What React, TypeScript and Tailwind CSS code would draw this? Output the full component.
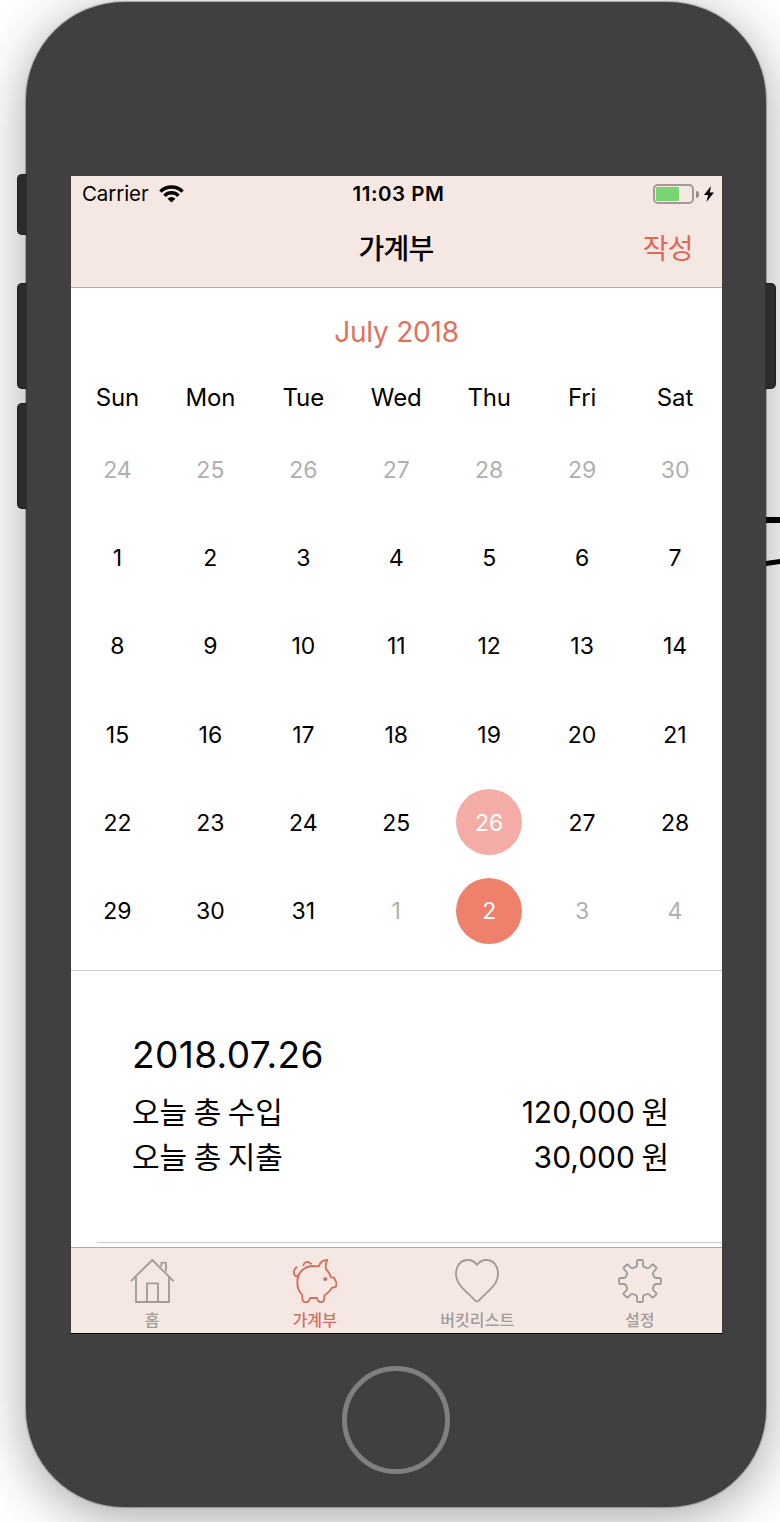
import type { ReactNode } from "react";

const weekdays = ["Sun", "Mon", "Tue", "Wed", "Thu", "Fri", "Sat"];

type DayKind = "normal" | "muted" | "selected" | "today";

const days: { label: number; kind: DayKind }[] = [
  ...[24, 25, 26, 27, 28, 29, 30].map((label) => ({ label, kind: "muted" as DayKind })),
  ...Array.from({ length: 31 }, (_, i) => ({
    label: i + 1,
    kind: (i + 1 === 26 ? "selected" : "normal") as DayKind,
  })),
  { label: 1, kind: "muted" },
  { label: 2, kind: "today" },
  { label: 3, kind: "muted" },
  { label: 4, kind: "muted" },
];

const dayStyles: Record<DayKind, string> = {
  normal: "text-black",
  muted: "text-[#b0b0b0]",
  selected: "bg-[#f4aca7] text-white",
  today: "bg-[#ef806b] text-white",
};

function gearPath() {
  const turn = (x: number, y: number, k: number) => {
    const a = (k * Math.PI) / 4;
    const px = 66 + x * Math.cos(a) - y * Math.sin(a);
    const py = 66 + x * Math.sin(a) + y * Math.cos(a);
    return `${px.toFixed(1)} ${py.toFixed(1)}`;
  };
  let d = `M${turn(-17, -41, 0)}`;
  for (let k = 0; k < 8; k++) {
    const p = (x: number, y: number) => turn(x, y, k);
    d += `Q${p(-9, -42)} ${p(-9, -49)}L${p(-9, -59)}Q${p(-9, -63)} ${p(-5, -63)}`;
    d += `L${p(5, -63)}Q${p(9, -63)} ${p(9, -59)}L${p(9, -49)}Q${p(9, -42)} ${p(17, -41)}`;
  }
  return d + "Z";
}

function Icon({ children }: { children: ReactNode }) {
  return (
    <svg
      viewBox="0 0 132 132"
      className="size-11"
      fill="none"
      stroke="currentColor"
      strokeWidth="5.6"
      strokeLinecap="round"
      strokeLinejoin="round"
    >
      {children}
    </svg>
  );
}

function HomeIcon() {
  return (
    <Icon>
      <path d="M4 65 67 3l62 62M18 54v75h99V54M51 129V73h33v56M94 21V11h14v24" />
    </Icon>
  );
}

function PigIcon() {
  return (
    <Icon>
      <path d="M13 72C12 42 31 23 58 21L77 22C81 11 91 3 103 3C98 12 97 21 99 31C106 37 111 45 114 55L123 56C127 60 126 67 130 69V79C129 84 123 86 117 86C111 97 103 104 94 110C94 117 94 123 91 127C86 131 79 130 75 125L72 117H52L48 125C44 131 35 131 30 127C26 122 30 115 27 106C18 98 13 87 13 72Z" />
      <path d="M11 25C3 29 1 40 4 47C6 52 10 53 17 50M31 19C34 9 43 5 54 14" />
      <circle cx="97" cy="60" r="3.5" fill="currentColor" />
    </Icon>
  );
}

function HeartIcon() {
  return (
    <Icon>
      <path d="M66 18C59 8 49 3 38 3C17 3 3 20 3 44C3 78 34 96 60 124Q66 131 72 124C98 96 129 78 129 44C129 20 115 3 94 3C83 3 73 8 66 18Z" />
    </Icon>
  );
}

function GearIcon() {
  return (
    <Icon>
      <path d={gearPath()} />
    </Icon>
  );
}

const tabs = [
  { label: "홈", icon: <HomeIcon />, active: false },
  { label: "가계부", icon: <PigIcon />, active: true },
  { label: "버킷리스트", icon: <HeartIcon />, active: false },
  { label: "설정", icon: <GearIcon />, active: false },
];

function StatusBar() {
  return (
    <div className="grid h-[36px] grid-cols-3 items-center px-[10px] text-[20.5px] leading-none">
      <div className="flex items-center gap-[10px] pl-[1px]">
        <span className="tracking-[-0.1px]">Carrier</span>
        <svg viewBox="0 0 26 19" className="mb-[1px] h-[18px] w-[25px]" fill="none" stroke="black" strokeWidth="3.6">
          <path d="M1.3 7A16.5 16.5 0 0 1 24.7 7M5.6 11.3A10.5 10.5 0 0 1 20.4 11.3" />
          <path d="M13 18.6 8.8 14.4A6 6 0 0 1 17.2 14.4Z" fill="black" stroke="none" />
        </svg>
      </div>
      <span className="pl-[4px] text-center text-[20.5px] font-semibold tracking-[0.5px]">11:03 PM</span>
      <div className="-mr-[2px] flex items-center justify-end">
        <div className="h-[20px] w-[41px] rounded-[5px] border-2 border-[#a39a97] p-[1px]">
          <div className="h-full w-[23px] rounded-[1px] bg-[#78d672]" />
        </div>
        <div className="ml-[2px] h-[7px] w-[3px] rounded-r-full bg-[#998f8c]" />
        <svg viewBox="0 0 10 16" className="ml-[5px] h-[16px] w-[10px]">
          <path d="M7 0 0 9H4.2L2.4 16 10 6.6H5.8Z" fill="black" />
        </svg>
      </div>
    </div>
  );
}

export default function App() {
  return (
    <div className="relative h-[1522px] w-[780px] overflow-hidden bg-white pt-[2px] pl-[26px] font-['Inter','Noto_Sans_CJK_KR',sans-serif] text-black">
      <div className="relative h-[1505px] w-[740px] rounded-[98px] bg-[#404040] pt-[174px] pl-[45px] shadow-[0_0_1px_1px_rgba(0,0,0,0.25),0_10px_54px_rgba(0,0,0,0.36)]">
        <div className="absolute top-[172px] -left-[9px] h-[61px] w-[10px] rounded-l-[5px] border border-r-0 border-[#1e1e1e] bg-[#2b2b2b]" />
        <div className="absolute top-[281px] -left-[9px] h-[106px] w-[10px] rounded-l-[5px] border border-r-0 border-[#1e1e1e] bg-[#2b2b2b]" />
        <div className="absolute top-[401px] -left-[9px] h-[106px] w-[10px] rounded-l-[5px] border border-r-0 border-[#1e1e1e] bg-[#2b2b2b]" />
        <div className="absolute top-[281px] -right-[10px] h-[106px] w-[11px] rounded-r-[5px] border border-l-0 border-[#1e1e1e] bg-[#2b2b2b]" />
        <svg className="absolute top-[510px] left-[740px] h-[60px] w-[14px]" viewBox="0 0 14 60">
          <path d="M0 5H14V11H0ZM0 49 14 47V52L0 54Z" fill="black" />
        </svg>

        <div className="flex h-[1158px] w-[651px] flex-col border-b border-black bg-white">
          <header className="h-[112px] shrink-0 border-b border-[#b2aaa7] bg-[#f5e8e3]">
            <StatusBar />
            <div className="grid h-[74px] grid-cols-3 items-center">
              <span />
              <h1 className="pr-[1px] text-center text-[28px] font-medium tracking-[-0.7px]">가계부</h1>
              <button className="justify-self-end pr-[29px] text-[28px] tracking-[-0.6px] text-[#e06753]">작성</button>
            </div>
          </header>

          <section className="h-[683px] shrink-0 border-b border-[#cccccc]">
            <h2 className="flex h-[88px] items-center justify-center text-[28px] tracking-[-0.2px] text-[#de7260]">
              July 2018
            </h2>
            <div className="grid h-[43px] w-[650.5px] grid-cols-7 place-items-center text-[24px] tracking-[-0.1px]">
              {weekdays.map((d) => (
                <span key={d}>{d}</span>
              ))}
            </div>
            <div className="mt-[7px] grid w-[650.5px] auto-rows-[88.1px] grid-cols-7 place-items-center text-[23px]">
              {days.map((d, i) => (
                <span key={i} className={`flex size-[66px] items-center justify-center rounded-full pt-[1px] ${dayStyles[d.kind]}`}>
                  {d.label}
                </span>
              ))}
            </div>
          </section>

          <section className="flex h-[276px] shrink-0 flex-col pl-[26px]">
            <div className="flex-1 pt-[60px] pr-[53px] pl-[35px]">
              <h3 className="text-[37px] leading-[48px] tracking-[0.4px]">2018.07.26</h3>
              <div className="mt-[11px] flex h-[45px] items-center justify-between text-[30px] [word-spacing:-2px]">
                <span>오늘 총 수입</span>
                <span>120,000 원</span>
              </div>
              <div className="flex h-[45px] items-center justify-between text-[30px] [word-spacing:-2px]">
                <span>오늘 총 지출</span>
                <span>30,000 원</span>
              </div>
            </div>
            <div className="mb-[4px] h-px bg-[#c8c8c8]" />
          </section>

          <nav className="grid flex-1 grid-cols-4 border-t border-[#b2aaa7] bg-[#f5e8e3] pr-px">
            {tabs.map((t) => (
              <div
                key={t.label}
                className={`flex flex-col items-center pt-[11px] ${t.active ? "text-[#d4705f]" : "text-[#9f9c9a]"}`}
              >
                {t.icon}
                <span className="mt-[7px] text-[16px] leading-[20px] font-medium tracking-[0.1px]">{t.label}</span>
              </div>
            ))}
          </nav>
        </div>

        <div className="mt-[32px] ml-[271px] size-[108px] rounded-full border-[5px] border-[#808080]" />
      </div>
    </div>
  );
}
